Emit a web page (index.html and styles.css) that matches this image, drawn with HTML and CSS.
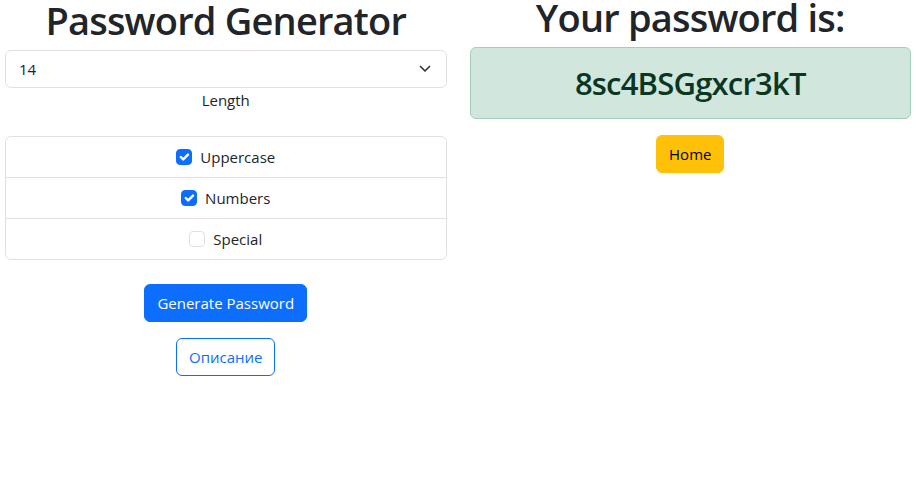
FILE: index.html
```html
<!DOCTYPE html>
<html lang="en">
<head>
<meta charset="utf-8">
<title>Password Generator</title>
<link rel="stylesheet" href="styles.css">
</head>
<body>
<div class="page">
  <section class="col">
    <h1 class="title">Password Generator</h1>
    <div class="select">
      <span>14</span>
      <svg class="chev" viewBox="0 0 12 8" width="12" height="8"><path d="M1.5 1.5 6 6l4.5-4.5" fill="none" stroke="#343a40" stroke-width="1.7" stroke-linecap="round" stroke-linejoin="round"/></svg>
    </div>
    <div class="caption">Length</div>
    <ul class="list">
      <li class="item"><label class="check"><span class="box on"><svg viewBox="0 0 20 20" width="16" height="16"><path d="m6 10 3 3 6-6" fill="none" stroke="#fff" stroke-width="3" stroke-linecap="round" stroke-linejoin="round"/></svg></span>Uppercase</label></li>
      <li class="item"><label class="check"><span class="box on"><svg viewBox="0 0 20 20" width="16" height="16"><path d="m6 10 3 3 6-6" fill="none" stroke="#fff" stroke-width="3" stroke-linecap="round" stroke-linejoin="round"/></svg></span>Numbers</label></li>
      <li class="item"><label class="check"><span class="box"></span>Special</label></li>
    </ul>
    <div class="actions">
      <button class="btn primary">Generate Password</button>
      <button class="btn outline">Описание</button>
    </div>
  </section>
  <section class="col">
    <h1 class="title right">Your password is:</h1>
    <div class="alert">8sc4BSGgxcr3kT</div>
    <div class="actions">
      <button class="btn warning">Home</button>
    </div>
  </section>
</div>
</body>
</html>
```
FILE: styles.css
```css
* { box-sizing: border-box; }
html, body { margin: 0; padding: 0; background: #fff; }
body {
  font-family: "Open Sans", "Noto Sans", sans-serif;
  font-size: 15px;
  line-height: 24px;
  color: #212529;
}
.page {
  display: flex;
  gap: 23px;
  padding: 0 5px;
}
.col {
  flex: 1 1 0;
  min-width: 0;
  display: flex;
  flex-direction: column;
}
.title {
  margin: 0 0 10px;
  font-size: 38px;
  line-height: 40px;
  letter-spacing: -0.8px;
  font-weight: 600;
  text-align: center;
  white-space: nowrap;
}
.title.right {
  line-height: 34px;
  margin-bottom: 13px;
}
.select {
  height: 38px;
  border: 1px solid #dee2e6;
  border-radius: 6px;
  padding: 6px 15px 6px 13px;
  display: flex;
  align-items: center;
  justify-content: space-between;
}
.chev { display: block; }
.caption {
  text-align: center;
  margin-bottom: 24px;
}
.list {
  list-style: none;
  margin: 0 0 24px;
  padding: 0;
  border: 1px solid #dee2e6;
  border-radius: 6px;
}
.item {
  height: 41px;
  padding: 8px 16px;
  display: flex;
  justify-content: center;
  align-items: center;
  border-top: 1px solid #dee2e6;
}
.item:first-child { height: 40px; border-top: 0; }
.check {
  display: flex;
  align-items: center;
  gap: 8px;
}
.box {
  flex: none;
  width: 16px;
  height: 16px;
  border: 1px solid #dee2e6;
  border-radius: 4px;
  background: #fff;
  position: relative;
}
.box.on {
  background: #0d6efd;
  border-color: #0d6efd;
}
.box svg { position: absolute; left: -1px; top: -1px; }
.actions {
  display: flex;
  flex-direction: column;
  align-items: center;
  gap: 16px;
}
.btn {
  font: inherit;
  height: 38px;
  padding: 6px 12px;
  border: 1px solid transparent;
  border-radius: 6px;
  line-height: 24px;
}
.primary { background: #0d6efd; border-color: #0d6efd; color: #fff; }
.outline { background: #fff; border-color: #0d6efd; color: #0d6efd; }
.warning { background: #ffc107; border-color: #ffc107; color: #000; }
.alert {
  margin-bottom: 16px;
  padding: 16px;
  border: 1px solid #a3cfbb;
  border-radius: 6px;
  background: #d1e7dd;
  color: #0a3622;
  text-align: center;
  font-size: 31px;
  line-height: 38px;
  letter-spacing: -0.8px;
  font-weight: 600;
}
```
